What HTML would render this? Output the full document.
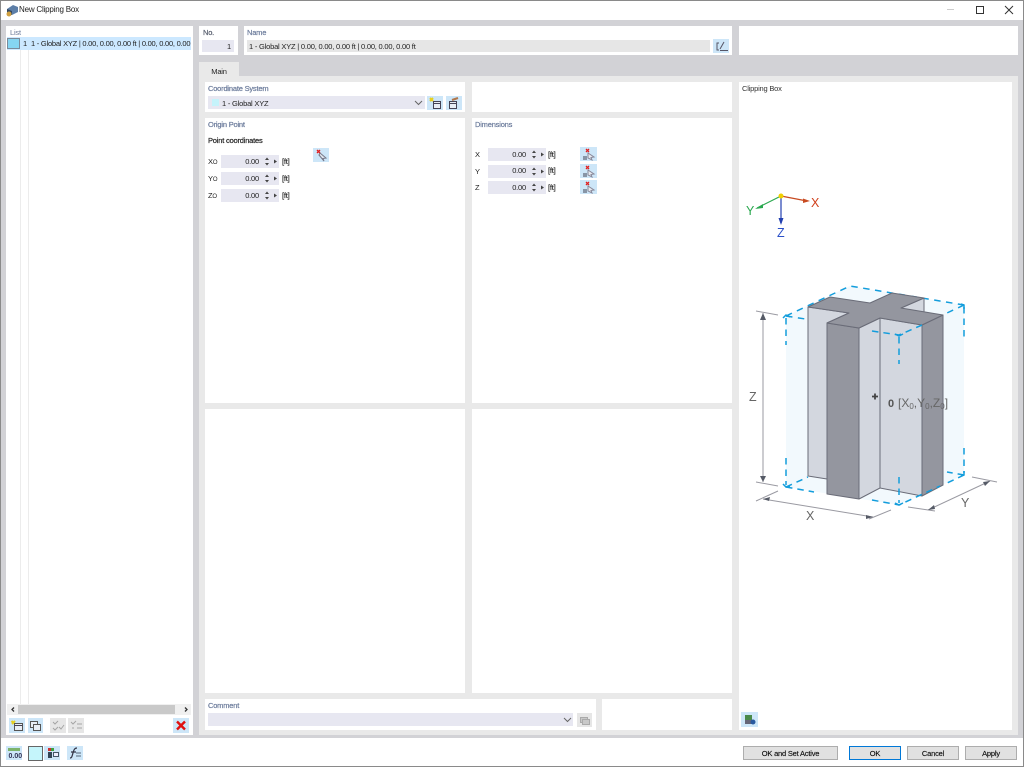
<!DOCTYPE html>
<html><head><meta charset="utf-8"><style>
html,body{margin:0;padding:0;background:#fff}
#w{position:relative;width:1024px;height:767px;overflow:hidden;background:#fff;font-family:"Liberation Sans",sans-serif;font-size:7.5px;letter-spacing:-.2px;color:#222;filter:blur(.3px)}
#w div{position:absolute;box-sizing:border-box}
.p{background:#fff}
.h{color:#6b7b9b;font-size:7.500px;white-space:nowrap;line-height:10px;-webkit-text-stroke:.2px #6b7b9b}
.t{white-space:nowrap;line-height:12px;font-size:7.500px}
.f{background:#e7e7f1}
.b{background:#cde6f8}
.g{background:#e6e6e6}
.btn{background:#e1e1e1;border:1px solid #adadad;text-align:center;line-height:13px;font-size:7.500px;color:#111;-webkit-text-stroke:.15px #111}
svg{position:absolute;overflow:visible}
</style></head><body><div id="w">
<div style="left:0;top:20px;width:1024px;height:718px;background:#d2d2d6"></div>
<div style="left:0;top:0;width:1024px;height:1px;background:#8a8a8a"></div>
<div style="left:0;top:0;width:1px;height:767px;background:#8a8a8a"></div>
<div style="left:1023px;top:0;width:1px;height:767px;background:#8a8a8a"></div>
<div style="left:0;top:766px;width:1024px;height:1px;background:#8a8a8a"></div>

<svg style="left:5px;top:3px" width="14" height="14" viewBox="0 0 14 14"><path d="M2 6L8 2L13 4V9L7 12L2 10Z" fill="#5d7fa8"/><path d="M2 6L7 8V12L2 10Z" fill="#33475f"/><circle cx="4" cy="11" r="2.500" fill="#d0a040"/></svg>
<div class="t" style="left:19px;top:4px;font-size:8px;color:#222">New Clipping Box</div>
<svg style="left:945px;top:4px" width="70" height="12" viewBox="0 0 70 12" fill="none" stroke="#333"><path d="M2 5.500H9" stroke="#ccc"/><rect x="31.500" y="2.500" width="7" height="7"/><path d="M60 2L68 10M68 2L60 10"/></svg>

<!-- list -->
<div class="p" style="left:6px;top:26px;width:187px;height:709px"></div>
<div class="t" style="left:10px;top:28px;color:#6b7b9b;line-height:10px">List</div>
<div style="left:20px;top:37px;width:1px;height:667px;background:#ececec"></div>
<div style="left:28px;top:37px;width:1px;height:667px;background:#ececec"></div>
<div style="left:7px;top:37px;width:184px;height:13px;background:#cce8ff"></div>
<div style="left:7px;top:38px;width:13px;height:11px;background:#85d5f2;border:1px solid #7a8a9a"></div>
<div class="t" style="left:23px;top:38px">1</div>
<div class="t" style="left:31px;top:38px;letter-spacing:-.23px">1 - Global XYZ | 0.00, 0.00, 0.00 ft | 0.00, 0.00, 0.00</div>
<div style="left:7px;top:704px;width:184px;height:11px;background:#f0f0f0"></div>
<div style="left:18px;top:705px;width:157px;height:9px;background:#c9c9c9"></div>
<svg style="left:7px;top:704px" width="184" height="11" fill="none" stroke="#333" stroke-width="1.300"><path d="M7 3.500L5 5.500L7 7.500M178 3.500L180 5.500L178 7.500"/></svg>

<div class="b" style="left:9px;top:718px;width:16px;height:15px"></div>
<div class="b" style="left:28px;top:718px;width:15px;height:15px"></div>
<div class="g" style="left:50px;top:718px;width:16px;height:15px"></div>
<div class="g" style="left:68px;top:718px;width:16px;height:15px"></div>
<div class="b" style="left:173px;top:718px;width:16px;height:15px"></div>
<svg style="left:0;top:718px" width="200" height="15" fill="none" stroke="#555">
<path d="M11.500 3L14 5.500M12 6L15 3" stroke="#e6d020" stroke-width="2"/><rect x="14.500" y="5.500" width="8" height="7" fill="#e8eef5"/><path d="M14.500 7.500H22.500" stroke="#445"/>
<rect x="30.500" y="3.500" width="7" height="6" fill="#e8eef5"/><rect x="33.500" y="6.500" width="7" height="6" fill="#e8eef5"/>
<path d="M53 4L55 6L58 3M53 10L55 12L58 9M59 9L61 11L64 7" stroke="#a5a5a5"/><path d="M71 4L73 6L76 3M72 10H74M77 6H82M77 10H82" stroke="#a5a5a5"/>
<path d="M177 3.500L185 11.500M185 3.500L177 11.500" stroke="#e01010" stroke-width="2.400"/></svg>

<!-- top panels -->
<div class="p" style="left:199px;top:26px;width:39px;height:29px"></div>
<div class="h" style="left:203px;top:28px;color:#555c6c;-webkit-text-stroke:.2px #555c6c">No.</div>
<div class="f" style="left:202px;top:40px;width:32px;height:12px"></div>
<div class="t" style="left:202px;top:41px;width:29px;text-align:right">1</div>
<div class="p" style="left:244px;top:26px;width:488px;height:29px"></div>
<div class="h" style="left:247px;top:28px">Name</div>
<div class="g" style="left:247px;top:40px;width:463px;height:12px"></div>
<div class="t" style="left:249px;top:41px">1 - Global XYZ | 0.00, 0.00, 0.00 ft | 0.00, 0.00, 0.00 ft</div>
<div class="b" style="left:713px;top:39px;width:16px;height:14px"></div>
<svg style="left:713px;top:39px" width="16" height="14" fill="none" stroke="#556"><path d="M6 4H4V11H6M7 10L11 3M7 11.500H15"/></svg>
<div class="p" style="left:739px;top:26px;width:279px;height:29px"></div>

<!-- tabs -->
<div style="left:199px;top:62px;width:40px;height:15px;background:#e9e9e9"></div>
<div class="t" style="left:199px;top:66px;width:40px;text-align:center">Main</div>
<div style="left:199px;top:76px;width:819px;height:659px;background:#e9e9e9"></div>

<!-- coord -->
<div class="p" style="left:205px;top:82px;width:260px;height:30px"></div>
<div class="h" style="left:208px;top:84px">Coordinate System</div>
<div class="f" style="left:208px;top:96px;width:217px;height:13px"></div>
<div style="left:212px;top:99px;width:7px;height:7px;background:#c5f3fb"></div>
<div class="t" style="left:222px;top:98px">1 - Global XYZ</div>
<svg style="left:414px;top:100px" width="9" height="6" fill="none" stroke="#666"><path d="M1 1L4.500 4.500L8 1"/></svg>
<div class="b" style="left:427px;top:96px;width:16px;height:14px"></div>
<div class="b" style="left:446px;top:96px;width:16px;height:14px"></div>
<svg style="left:427px;top:96px" width="36" height="14" fill="none" stroke="#445"><path d="M3 2L6 5M3 5L6 2" stroke="#e6d020" stroke-width="2"/><rect x="6.500" y="5.500" width="7" height="7" fill="#e8eef5"/><path d="M6.500 7.500H13.500"/><rect x="22.500" y="5.500" width="7" height="7" fill="#e8eef5"/><path d="M22.500 7.500H29.500"/><path d="M25 4L31 2" stroke="#b0764a" stroke-width="2"/></svg>
<div class="p" style="left:472px;top:82px;width:260px;height:30px"></div>

<!-- origin -->
<div class="p" style="left:205px;top:118px;width:260px;height:285px"></div>
<div class="h" style="left:208px;top:120px">Origin Point</div>
<div class="t" style="left:208px;top:135px;-webkit-text-stroke:.2px #222;color:#222">Point coordinates</div>
<div class="b" style="left:313px;top:148px;width:16px;height:14px"></div>
<svg style="left:313px;top:148px" width="16" height="14"><path d="M7 5L13 10L10 10.500L11 13L6 7Z" fill="#dfe6ee" stroke="#778"/><path d="M4 2L7 5M7 2L4 5" stroke="#e02020" stroke-width="1.400"/></svg>
<div class="t" style="left:208px;top:156px">X<span style="font-size:6px">O</span></div>
<div class="t" style="left:208px;top:173px">Y<span style="font-size:6px">O</span></div>
<div class="t" style="left:208px;top:190px">Z<span style="font-size:6px">O</span></div>
<div class="f" style="left:221px;top:155px;width:58px;height:13px"></div>
<div class="f" style="left:221px;top:172px;width:58px;height:13px"></div>
<div class="f" style="left:221px;top:189px;width:58px;height:13px"></div>
<div class="t" style="left:221px;top:156px;width:38px;text-align:right">0.00</div>
<div class="t" style="left:221px;top:173px;width:38px;text-align:right">0.00</div>
<div class="t" style="left:221px;top:190px;width:38px;text-align:right">0.00</div>
<div class="t" style="left:282px;top:156px;-webkit-text-stroke:.15px #222">[ft]</div>
<div class="t" style="left:282px;top:173px;-webkit-text-stroke:.15px #222">[ft]</div>
<div class="t" style="left:282px;top:190px;-webkit-text-stroke:.15px #222">[ft]</div>
<svg style="left:264px;top:155px" width="14" height="48" fill="#444"><path d="M1 5L3 2.500L5 5ZM1 8L3 10.500L5 8ZM10 4.500L13 6.500L10 8.500Z"/><path transform="translate(0,17)" d="M1 5L3 2.500L5 5ZM1 8L3 10.500L5 8ZM10 4.500L13 6.500L10 8.500Z"/><path transform="translate(0,34)" d="M1 5L3 2.500L5 5ZM1 8L3 10.500L5 8ZM10 4.500L13 6.500L10 8.500Z"/></svg>

<!-- dimensions -->
<div class="p" style="left:472px;top:118px;width:260px;height:285px"></div>
<div class="h" style="left:475px;top:120px">Dimensions</div>
<div class="t" style="left:475px;top:149px">X</div>
<div class="t" style="left:475px;top:166px">Y</div>
<div class="t" style="left:475px;top:182px">Z</div>
<div class="f" style="left:488px;top:148px;width:58px;height:13px"></div>
<div class="f" style="left:488px;top:165px;width:58px;height:13px"></div>
<div class="f" style="left:488px;top:181px;width:58px;height:13px"></div>
<div class="t" style="left:488px;top:149px;width:38px;text-align:right">0.00</div>
<div class="t" style="left:488px;top:165px;width:38px;text-align:right">0.00</div>
<div class="t" style="left:488px;top:182px;width:38px;text-align:right">0.00</div>
<div class="t" style="left:548px;top:149px;-webkit-text-stroke:.15px #222">[ft]</div>
<div class="t" style="left:548px;top:165px;-webkit-text-stroke:.15px #222">[ft]</div>
<div class="t" style="left:548px;top:182px;-webkit-text-stroke:.15px #222">[ft]</div>
<svg style="left:531px;top:148px" width="14" height="48" fill="#444"><path d="M1 5L3 2.500L5 5ZM1 8L3 10.500L5 8ZM10 4.500L13 6.500L10 8.500Z"/><path transform="translate(0,17)" d="M1 5L3 2.500L5 5ZM1 8L3 10.500L5 8ZM10 4.500L13 6.500L10 8.500Z"/><path transform="translate(0,33)" d="M1 5L3 2.500L5 5ZM1 8L3 10.500L5 8ZM10 4.500L13 6.500L10 8.500Z"/></svg>
<div class="b" style="left:580px;top:147px;width:17px;height:14px"></div>
<div class="b" style="left:580px;top:164px;width:17px;height:14px"></div>
<div class="b" style="left:580px;top:180px;width:17px;height:14px"></div>
<svg style="left:580px;top:147px" width="17" height="48" fill="none"><g><path d="M6 2L9 5M9 2L6 5" stroke="#e02020" stroke-width="1.300"/><path d="M8 6L14 10L11 10.500L12 13L8 11Z" fill="#e6eaf0" stroke="#889"/><path d="M3 10H7M3 12H7" stroke="#445"/></g><g transform="translate(0,17)"><path d="M6 2L9 5M9 2L6 5" stroke="#e02020" stroke-width="1.300"/><path d="M8 6L14 10L11 10.500L12 13L8 11Z" fill="#e6eaf0" stroke="#889"/><path d="M3 10H7M3 12H7" stroke="#445"/></g><g transform="translate(0,33)"><path d="M6 2L9 5M9 2L6 5" stroke="#e02020" stroke-width="1.300"/><path d="M8 6L14 10L11 10.500L12 13L8 11Z" fill="#e6eaf0" stroke="#889"/><path d="M3 10H7M3 12H7" stroke="#445"/></g></svg>

<!-- lower -->
<div class="p" style="left:205px;top:409px;width:260px;height:284px"></div>
<div class="p" style="left:472px;top:409px;width:260px;height:284px"></div>
<div class="p" style="left:205px;top:699px;width:391px;height:31px"></div>
<div class="h" style="left:208px;top:701px">Comment</div>
<div class="f" style="left:208px;top:713px;width:365px;height:13px"></div>
<svg style="left:563px;top:717px" width="9" height="6" fill="none" stroke="#666"><path d="M1 1L4.500 4.500L8 1"/></svg>
<div class="g" style="left:577px;top:713px;width:15px;height:14px"></div>
<svg style="left:577px;top:713px" width="15" height="14" fill="#c8c8c8" stroke="#aaa"><rect x="3.500" y="4.500" width="7" height="5"/><rect x="5.500" y="6.500" width="7" height="5"/></svg>
<div class="p" style="left:602px;top:699px;width:130px;height:31px"></div>

<!-- clipping box -->
<div class="p" style="left:739px;top:82px;width:273px;height:648px"></div>
<div class="t" style="left:742px;top:84px;line-height:10px;color:#333">Clipping Box</div>
<svg style="left:0;top:0" width="1024" height="767">
<polygon points="786,316 850,286 964,305 964,475 899,505 786,487" fill="#f2f9fd"/>
<g fill="none" stroke="#139ddc" stroke-width="1.500">
<path d="M786 316L850 286L964 305" stroke-dasharray="6.500 5.500"/>
<path d="M786 316L812 320" stroke-dasharray="6.500 5.500"/>
<path d="M964 305L930 321" stroke-dasharray="6.500 5.500"/>
<path d="M786 318V345" stroke-dasharray="6.500 5"/>
<path d="M964 307V337" stroke-dasharray="6.500 5"/>
<path d="M786 458V485" stroke-dasharray="6.500 5"/>
<path d="M964 448V473" stroke-dasharray="6.500 5"/>
<path d="M786 487L808 477" stroke-dasharray="6.500 5"/>
<path d="M786 487L814 492" stroke-dasharray="6.500 5"/>
<path d="M964 475L947 472" stroke-dasharray="6.500 5"/>
<path d="M964 475L943 485" stroke-dasharray="6.500 5"/>
<path d="M783 318L786 315L790 317M961 304L964 305L964 309M783 484L786 487L790 486M961 476L964 475L964 471"/>
</g>
<g stroke="#6a6c78" stroke-width="1" stroke-linejoin="round">
<polygon points="901,308 924,298 924,316" fill="#d3d7df"/>
<polygon points="808,307 849,313 827,323 827,479 808,476" fill="#d3d7df"/>
<polygon points="827,323 859,328 859,499 827,494" fill="#94969f"/>
<polygon points="859,328 880,318 880,488 859,499" fill="#d3d7df"/>
<polygon points="880,318 922,325 922,496 880,488" fill="#d3d7df"/>
<polygon points="922,325 943,315 943,485 922,496" fill="#94969f"/>
<polygon points="808,307 830,297 870,303 892,293 924,298 901,308 943,315 922,325 880,318 859,328 827,323 849,313" fill="#94969f"/>
</g>
<g fill="none" stroke="#139ddc" stroke-width="1.500">
<path d="M872 331L899 335L922 325" stroke-dasharray="6.500 5"/>
<path d="M899 337V364" stroke-dasharray="6.500 5"/>
<path d="M899 477V503" stroke-dasharray="6.500 5"/>
<path d="M872 500L899 505L940 486" stroke-dasharray="6.500 5"/>
<path d="M895 334L899 336L903 334M895 503L899 505L903 503"/>
</g>
<path d="M872 396.500H878M875 393.500V399.500" stroke="#444" stroke-width="1.800"/>
<g fill="none" stroke="#9a9aa2" stroke-width="1">
<path d="M756 311L778 315M763 313V482M756 482L778 486"/>
<path d="M756 501L778 491M869 519L891 510M763 499L873 517"/>
<path d="M908 507L935 511M972 477L997 482M928 510L990 481"/>
</g>
<g fill="#555a66"><path d="M763 313L766 320H760ZM763 482L766 476H760ZM763 499L770 497L769 501ZM873 517L866 519L866 515ZM928 510L934 505L935 509ZM990 481L983 482L985 486Z"/></g>
<g font-family="Liberation Sans" font-size="12.500" fill="#666" letter-spacing="0">
<text x="749" y="401">Z</text><text x="806" y="520">X</text><text x="961" y="507">Y</text>
<text x="888" y="407" font-weight="bold" font-size="11" fill="#555">0</text>
<text x="898" y="407" font-size="12">[X<tspan font-size="8" dy="2">0</tspan><tspan dy="-2">,Y</tspan><tspan font-size="8" dy="2">0</tspan><tspan dy="-2">,Z</tspan><tspan font-size="8" dy="2">0</tspan><tspan dy="-2">]</tspan></text>
</g>
<path d="M781 196L807 201" stroke="#c84a20" stroke-width="1.200"/><path d="M810 201L803 198.500L803 203Z" fill="#c84a20"/>
<path d="M781 196L757 208" stroke="#2aa84f" stroke-width="1.200"/><path d="M755 209L763 204L763 208Z" fill="#2aa84f"/>
<path d="M781 196V223" stroke="#2340b0" stroke-width="1.200"/><path d="M781 225L778.500 218H783.500Z" fill="#2340b0"/>
<circle cx="781" cy="196" r="2.500" fill="#f0d000"/>
<g font-family="Liberation Sans" font-size="12.500" letter-spacing="0"><text x="811" y="207" fill="#d0401c">X</text><text x="746" y="215" fill="#2aa84f">Y</text><text x="777" y="237" fill="#2a50c8">Z</text></g>
</svg>
<div class="b" style="left:741px;top:712px;width:17px;height:15px"></div>
<svg style="left:741px;top:712px" width="17" height="15"><rect x="4" y="3" width="7" height="5" fill="#4a8a4a"/><rect x="4" y="8" width="9" height="4" fill="#667"/><circle cx="12" cy="10" r="2.500" fill="#2a5aa0"/></svg>

<!-- bottom bar -->
<div class="b" style="left:6px;top:746px;width:16px;height:14px"></div>
<svg style="left:6px;top:746px" width="16" height="14"><rect x="2" y="2" width="12" height="3" fill="#7cb36b"/><text x="2.500" y="12" font-family="Liberation Sans" font-size="7" font-weight="bold" fill="#335" letter-spacing="0">0.00</text></svg>
<div style="left:28px;top:746px;width:15px;height:15px;background:#c5f5fb;border:1px solid #666"></div>
<div class="b" style="left:44px;top:746px;width:16px;height:14px"></div>
<svg style="left:44px;top:746px" width="16" height="14"><rect x="4" y="2" width="3" height="3" fill="#d03030"/><rect x="7" y="2" width="3" height="3" fill="#40a040"/><path d="M4 6H8V12H4Z" fill="#345"/><rect x="9.500" y="6.500" width="5" height="4" fill="#eef" stroke="#456"/></svg>
<div class="b" style="left:67px;top:746px;width:16px;height:14px"></div>
<svg style="left:67px;top:746px" width="16" height="14" fill="none" stroke="#334"><path d="M3 12C5 12 5 10 6 7C7 3 8 2 10 2M4 6H9" stroke-width="1.200"/><path d="M9 7H14M9 10H14" stroke="#567"/></svg>
<div class="btn" style="left:743px;top:746px;width:95px;height:14px">OK and Set Active</div>
<div class="btn" style="left:849px;top:746px;width:52px;height:14px;border:1.500px solid #0078d7">OK</div>
<div class="btn" style="left:907px;top:746px;width:52px;height:14px">Cancel</div>
<div class="btn" style="left:965px;top:746px;width:52px;height:14px">Apply</div>
</div></body></html>
